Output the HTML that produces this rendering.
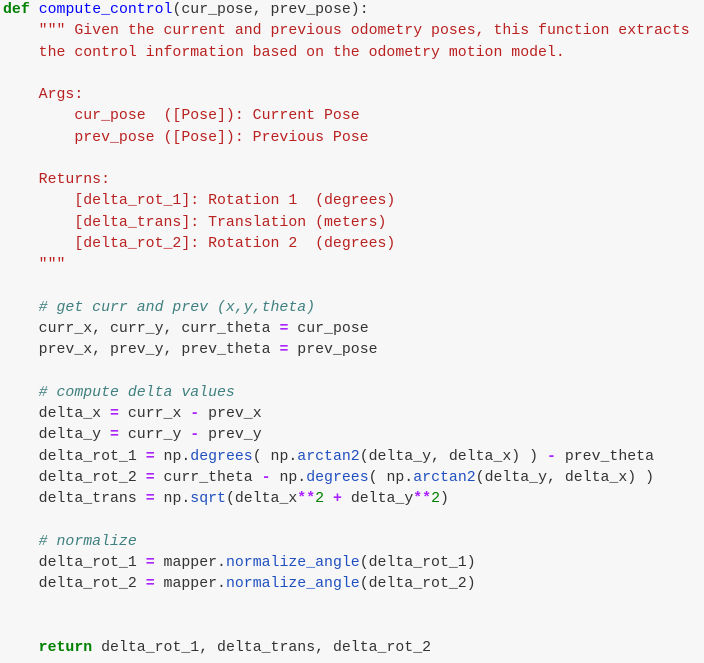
<!DOCTYPE html>
<html><head><meta charset="utf-8"><style>
html,body{margin:0;padding:0;background:#f7f7f7;width:704px;height:663px;overflow:hidden}
pre{margin:0;padding:0 0 0 3px;font-family:"Liberation Mono",monospace;font-size:14.87px;line-height:21.27px;color:#333}
.k{color:#008000;font-weight:bold}.f{color:#0000ff}.s{color:#ba2121}.c{color:#408080;font-style:italic}.o{color:#aa22ff;font-weight:bold}.m{color:#2050c0}.n{color:#008000}
</style></head><body><pre><span class="k">def</span> <span class="f">compute_control</span>(cur_pose, prev_pose):
    <span class="s">""" Given the current and previous odometry poses, this function extracts
    the control information based on the odometry motion model.

    Args:
        cur_pose  ([Pose]): Current Pose
        prev_pose ([Pose]): Previous Pose

    Returns:
        [delta_rot_1]: Rotation 1  (degrees)
        [delta_trans]: Translation (meters)
        [delta_rot_2]: Rotation 2  (degrees)
    """</span>

    <span class="c"># get curr and prev (x,y,theta)</span>
    curr_x, curr_y, curr_theta <span class="o">=</span> cur_pose
    prev_x, prev_y, prev_theta <span class="o">=</span> prev_pose

    <span class="c"># compute delta values</span>
    delta_x <span class="o">=</span> curr_x <span class="o">-</span> prev_x
    delta_y <span class="o">=</span> curr_y <span class="o">-</span> prev_y
    delta_rot_1 <span class="o">=</span> np.<span class="m">degrees</span>( np.<span class="m">arctan2</span>(delta_y, delta_x) ) <span class="o">-</span> prev_theta
    delta_rot_2 <span class="o">=</span> curr_theta <span class="o">-</span> np.<span class="m">degrees</span>( np.<span class="m">arctan2</span>(delta_y, delta_x) )
    delta_trans <span class="o">=</span> np.<span class="m">sqrt</span>(delta_x<span class="o">**</span><span class="n">2</span> <span class="o">+</span> delta_y<span class="o">**</span><span class="n">2</span>)

    <span class="c"># normalize</span>
    delta_rot_1 <span class="o">=</span> mapper.<span class="m">normalize_angle</span>(delta_rot_1)
    delta_rot_2 <span class="o">=</span> mapper.<span class="m">normalize_angle</span>(delta_rot_2)


    <span class="k">return</span> delta_rot_1, delta_trans, delta_rot_2
</pre></body></html>
